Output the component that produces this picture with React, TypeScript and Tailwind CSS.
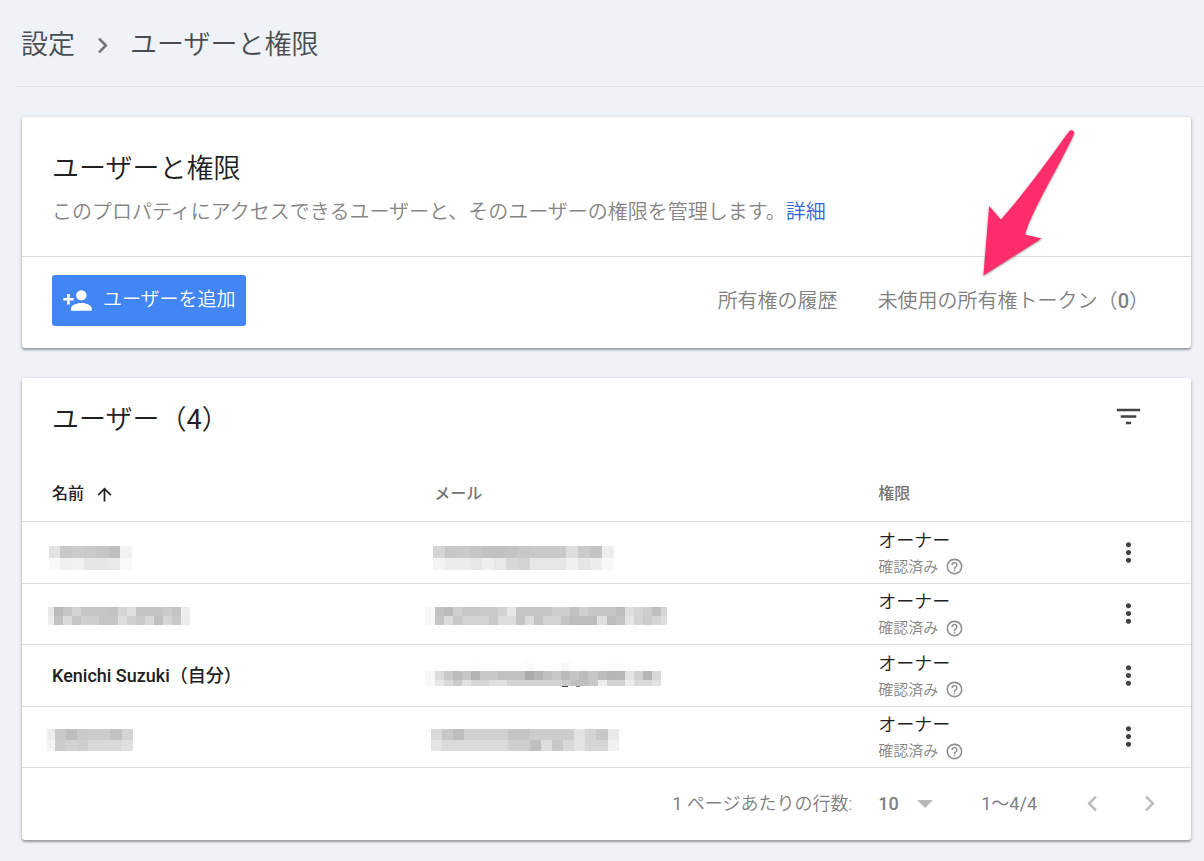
import React from "react";
import {
  MdArrowUpward,
  MdChevronLeft,
  MdChevronRight,
  MdFilterList,
  MdHelpOutline,
  MdMoreVert,
  MdPersonAdd,
} from "react-icons/md";

// A pixelated strip: each run is [x, width, grey level], in row coordinates.
type Run = [number, number, number];
type Band = { y: number; h: number; runs: Run[] };

function Mosaic({ label, width, bands }: { label: string; width: number; bands: Band[] }) {
  return (
    <svg role="img" aria-label={label} width={width} height={60} viewBox={`0 0 ${width} 60`} shapeRendering="crispEdges" className="block">
      {bands.map((band) =>
        band.runs.map(([x, w, g]) => (
          <rect key={`${band.y}-${x}`} x={x} y={band.y} width={w} height={band.h} fill={`rgb(${g},${g},${g})`} />
        )),
      )}
    </svg>
  );
}

type User = { id: string; name: Band[] | string; email: Band[] };

const users: User[] = [
  {
    id: "1",
    name: [
      { y: 24, h: 12, runs: [[2, 11, 227], [13, 12, 200], [25, 12, 204], [37, 12, 202], [49, 12, 197], [61, 12, 194], [63, 10, 190], [73, 12, 242]] },
      { y: 36, h: 12, runs: [[2, 11, 249], [13, 12, 239], [25, 12, 242], [37, 24, 230], [61, 12, 233], [73, 12, 249]] },
    ],
    email: [
      { y: 24, h: 12, runs: [[8, 12, 212], [20, 12, 199], [32, 13, 202], [45, 12, 197], [57, 24, 193], [81, 12, 195], [93, 12, 199], [105, 36, 201], [141, 12, 221], [153, 12, 203], [165, 12, 196], [177, 12, 238]] },
      { y: 36, h: 12, runs: [[8, 12, 243], [20, 25, 236], [45, 12, 231], [57, 12, 239], [69, 12, 232], [81, 12, 216], [93, 12, 211], [105, 36, 231], [141, 12, 240], [153, 12, 230], [165, 12, 236], [177, 12, 248]] },
    ],
  },
  {
    id: "2",
    name: [
      { y: 23, h: 9, runs: [[1, 6, 232], [7, 9, 186], [16, 9, 197], [25, 9, 211], [34, 27, 198], [61, 10, 195], [71, 9, 214], [80, 9, 224], [89, 27, 196], [116, 9, 203], [125, 9, 196], [134, 9, 238]] },
      { y: 32, h: 9, runs: [[1, 6, 238], [7, 9, 193], [16, 9, 218], [25, 9, 197], [34, 18, 207], [52, 19, 198], [71, 9, 222], [80, 9, 208], [89, 9, 201], [98, 9, 215], [107, 9, 190], [116, 9, 214], [125, 9, 200], [134, 9, 235]] },
    ],
    email: [
      { y: 23, h: 9, runs: [[0, 10, 247], [10, 9, 193], [19, 9, 187], [28, 9, 207], [37, 18, 199], [55, 18, 201], [73, 9, 211], [82, 9, 230], [91, 36, 197], [127, 18, 207], [145, 9, 193], [154, 9, 208], [163, 28, 198], [191, 9, 188], [200, 9, 224], [209, 9, 213], [218, 9, 205], [227, 9, 190], [236, 6, 214]] },
      { y: 32, h: 9, runs: [[0, 10, 246], [10, 9, 195], [19, 9, 220], [28, 9, 200], [37, 27, 210], [64, 9, 199], [73, 18, 221], [91, 9, 196], [100, 9, 220], [109, 9, 195], [118, 18, 211], [136, 9, 194], [145, 27, 188], [172, 10, 223], [182, 9, 188], [191, 9, 196], [200, 9, 229], [209, 9, 212], [218, 9, 203], [227, 9, 213], [236, 6, 222]] },
    ],
  },
  {
    id: "3",
    name: "Kenichi Suzuki（自分）",
    email: [
      { y: 17, h: 9, runs: [[46, 9, 252], [100, 9, 250], [136, 9, 248], [182, 18, 251]] },
      { y: 26, h: 9, runs: [[0, 10, 247], [10, 9, 219], [19, 9, 200], [28, 9, 187], [37, 9, 199], [46, 9, 180], [55, 18, 200], [73, 27, 192], [100, 9, 170], [109, 9, 181], [118, 9, 191], [127, 9, 200], [136, 9, 186], [145, 9, 197], [154, 9, 187], [163, 10, 198], [173, 9, 188], [182, 9, 181], [191, 9, 184], [200, 9, 228], [209, 9, 209], [218, 9, 181], [227, 9, 216]] },
      { y: 35, h: 6, runs: [[0, 10, 249], [10, 9, 233], [19, 9, 217], [28, 9, 202], [37, 9, 226], [46, 18, 215], [64, 18, 223], [82, 55, 211], [137, 9, 202], [146, 18, 191], [164, 9, 199], [173, 9, 238], [182, 18, 210], [200, 9, 236], [209, 18, 218], [227, 9, 226]] },
      { y: 41, h: 1, runs: [[137, 6, 70], [151, 4, 120]] },
    ],
  },
  {
    id: "4",
    name: [
      { y: 22, h: 11, runs: [[0, 8, 236], [8, 11, 201], [19, 11, 190], [30, 11, 201], [41, 22, 205], [63, 12, 194], [75, 11, 212]] },
      { y: 33, h: 11, runs: [[0, 8, 244], [8, 11, 204], [19, 11, 210], [30, 11, 206], [41, 34, 217], [75, 11, 224]] },
    ],
    email: [
      { y: 22, h: 11, runs: [[6, 11, 217], [17, 11, 200], [28, 11, 189], [39, 44, 208], [83, 22, 197], [105, 44, 205], [149, 11, 227], [160, 11, 212], [171, 12, 200], [183, 11, 233]] },
      { y: 33, h: 11, runs: [[6, 11, 228], [17, 66, 218], [83, 22, 206], [105, 11, 191], [116, 11, 221], [127, 11, 200], [138, 11, 217], [149, 11, 228], [160, 23, 213], [183, 11, 240]] },
    ],
  },
];

const card =
  "rounded-[3px] bg-white shadow-[0_2px_2px_rgba(0,0,0,0.26),0_1px_4px_rgba(0,0,0,0.18)]";

function PinkArrow() {
  return (
    <svg
      aria-hidden="true"
      width="100"
      height="156"
      viewBox="978 126 100 156"
      className="pointer-events-none absolute top-[9px] right-[113px] drop-shadow-[0_1px_1px_rgba(0,0,0,0.4)]"
    >
      <path
        d="M983.4 275.5 L989.2 206 L1001 219.4 C1022 196 1046 163 1069 131.5 C1071.500 128.500 1075.500 131 1073.800 134.500 C1058 169 1034 206 1025 234.400 L1041.600 238.500 Z"
        fill="#ff2d6b"
      />
    </svg>
  );
}

export default function App() {
  return (
    <div
      lang="ja"
      className="min-h-screen bg-[#eff2f7] pb-5 font-['Roboto','Noto_Sans_CJK_JP',sans-serif] text-[#212121]"
    >
      <header className="ml-4 border-b border-[#dfe2e6] pt-[25px] pb-[21px] pl-[5px]">
        <nav aria-label="パンくずリスト" className="flex h-10 items-center gap-3 text-[27px] leading-10 font-[350] text-[#4a4d50]">
          <a href="#settings">設定</a>
          <MdChevronRight aria-hidden="true" className="size-[31px] text-[#757575]" />
          <span aria-current="page">ユーザーと権限</span>
        </nav>
      </header>

      <main className="flex flex-col gap-[30px] pt-[30px] pr-[13px] pl-[22px]">
        <section className={`relative ${card}`}>
          <div className="border-b border-[#dadcdc] px-[30px] pt-[33px] pb-[30px]">
            <h1 className="text-[27px] leading-[38px] font-[350]">ユーザーと権限</h1>
            <p className="mt-[10px] text-[20px] leading-7 font-[350] text-[#858585]">
              このプロパティにアクセスできるユーザーと、そのユーザーの権限を管理します。
              <a href="#details" className="text-[#3367d6]">詳細</a>
            </p>
          </div>
          <div className="flex items-center justify-between pt-[18px] pr-[42px] pb-[22px] pl-[30px]">
            <button type="button" className="flex h-[51px] items-center gap-[10px] rounded-[3px] bg-[#4285f4] px-[10px] text-[19px] font-[350] text-white">
              <MdPersonAdd aria-hidden="true" className="size-[31px]" />
              ユーザーを追加
            </button>
            <div className="flex gap-10 text-[20px] leading-7 font-[350] text-[#808080]">
              <a href="#history">所有権の履歴</a>
              <a href="#tokens">
                未使用の所有権トークン（<span className="font-medium">0</span>）
              </a>
            </div>
          </div>
          <PinkArrow />
        </section>

        <section className={card}>
          <div className="flex items-start justify-between pt-[23px] pr-[47px] pb-[28px] pl-[30px]">
            <h2 className="text-[27px] leading-[38px] font-[350]">
              ユーザー（<span className="font-normal">4</span>）
            </h2>
            <button type="button" aria-label="フィルタ">
              <MdFilterList className="size-[31px] text-[#424242]" />
            </button>
          </div>

          <table className="w-full table-fixed border-collapse text-left">
            <colgroup>
              <col className="w-[35%]" />
              <col className="w-[38%]" />
              <col />
              <col className="w-[126px]" />
            </colgroup>
            <thead className="text-[16px] font-medium text-[#757575]">
              <tr className="h-[54px] border-b border-[#e0e0e0]">
                <th scope="col" aria-sort="ascending" className="pl-[30px] font-medium text-[#212121]">
                  <button type="button" className="flex items-center gap-[10px]">
                    名前
                    <MdArrowUpward aria-hidden="true" className="mt-0.5 size-[21px]" />
                  </button>
                </th>
                <th scope="col" className="pl-[3px] font-medium">メール</th>
                <th scope="col" className="pl-[3px] font-medium">権限</th>
                <td />
              </tr>
            </thead>
            <tbody>
              {users.map((user) => (
                <tr key={user.id} className="border-b border-[#e0e0e0] odd:h-[62px] even:h-[61px]">
                  <td className="py-0 pl-[25px]">
                    {typeof user.name === "string" ? (
                      <span className="pl-[5px] text-[18px] font-medium">{user.name}</span>
                    ) : (
                      <Mosaic label="非表示の名前" width={160} bands={user.name} />
                    )}
                  </td>
                  <td className="py-0">
                    <div className="-ml-[6px]">
                      <Mosaic label="非表示のメール" width={250} bands={user.email} />
                    </div>
                  </td>
                  <td className="pt-[3px] pl-[3px] font-[350]">
                    <div className="text-[18px] leading-[26px]">オーナー</div>
                    <div className="flex items-center gap-[7px] text-[15px] leading-[26px] text-[#858585]">
                      確認済み
                      <button type="button" aria-label="ヘルプ">
                        <MdHelpOutline className="size-[19px] text-[#8f8f8f]" />
                      </button>
                    </div>
                  </td>
                  <td>
                    <button type="button" aria-label="その他の操作" className="ml-auto mr-[47px] block">
                      <MdMoreVert className="size-[31px] text-[#424242]" />
                    </button>
                  </td>
                </tr>
              ))}
            </tbody>
          </table>

          <div className="flex h-[72px] items-center justify-end pr-[26px] text-[18px] font-[350] text-[#808080]">
            <label htmlFor="rows" className="pr-[26px]">
              <span className="font-normal">1</span> ページあたりの行数:
            </label>
            <span className="relative flex items-center">
              <select id="rows" defaultValue="10" className="w-[55px] appearance-none bg-transparent font-medium outline-none">
                <option>10</option>
              </select>
              <svg aria-hidden="true" width="16" height="8" viewBox="0 0 16 8" className="pointer-events-none absolute right-0">
                <path d="M0 0h16L8 8z" fill="#b8b8b8" />
              </svg>
            </span>
            <span className="pr-10 pl-12 font-normal">1〜4/4</span>
            <div className="flex gap-[26px] text-[#bdbdbd]">
              <button type="button" aria-label="前のページ">
                <MdChevronLeft className="size-[31px]" />
              </button>
              <button type="button" aria-label="次のページ">
                <MdChevronRight className="size-[31px]" />
              </button>
            </div>
          </div>
        </section>
      </main>
    </div>
  );
}
